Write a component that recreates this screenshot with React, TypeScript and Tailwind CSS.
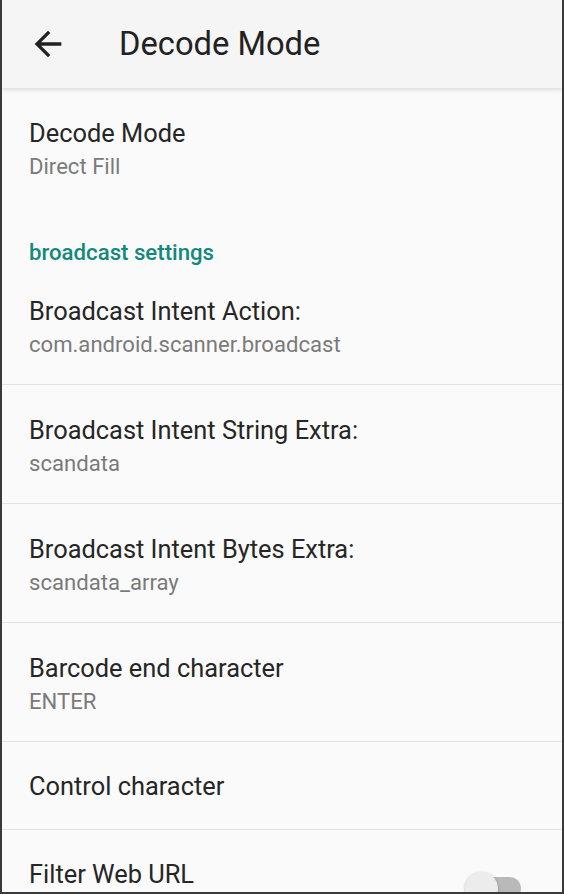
import React from "react";

const font = { fontFamily: "Roboto, 'Noto Sans', sans-serif" };

function TwoLine({ title, sub, divider = true }: { title: string; sub: string; divider?: boolean }) {
  return (
    <div className={`flex h-[119px] shrink-0 flex-col pl-[27px] pt-[29px] ${divider ? "border-b border-[#e3e3e3]" : ""}`}>
      <div className="text-[25.4px] leading-[32px] text-[#262626]">{title}</div>
      <div className="mt-[2px] text-[22.1px] leading-[30px] text-[#7a7a7a]">{sub}</div>
    </div>
  );
}

export default function App() {
  return (
    <div
      className="flex h-[894px] w-[564px] flex-col overflow-hidden border-b-2 border-l-2 border-r-2 border-[#3a3a3a] bg-[#fafafa]"
      style={font}
    >
      <div className="relative z-10 flex h-[88px] shrink-0 items-center bg-[#f5f5f5] shadow-[0_2px_4px_rgba(0,0,0,0.12)]">
        <svg className="ml-[26px] h-[40px] w-[40px]" viewBox="0 0 24 24" fill="#222">
          <path d="M20 11H7.83l5.59-5.59L12 4l-8 8 8 8 1.41-1.41L7.83 13H20v-2z" />
        </svg>
        <div className="ml-[51px] text-[32.7px] leading-[40px] text-[#222]">Decode Mode</div>
      </div>

      <TwoLine title="Decode Mode" sub="Direct Fill" divider={false} />

      <div className="h-[59px] shrink-0 pl-[27px] pt-[31px] text-[22.2px] font-medium leading-[28px] text-[#13897c]">
        broadcast settings
      </div>

      <TwoLine title="Broadcast Intent Action:" sub="com.android.scanner.broadcast" />
      <TwoLine title="Broadcast Intent String Extra:" sub="scandata" />
      <TwoLine title="Broadcast Intent Bytes Extra:" sub="scandata_array" />
      <TwoLine title="Barcode end character" sub="ENTER" />

      <div className="h-[88px] shrink-0 border-b border-[#e3e3e3] pl-[27px] pt-[28px] text-[25.4px] leading-[32px] text-[#262626]">
        Control character
      </div>

      <div className="flex h-[88px] shrink-0 items-start justify-between pl-[27px] pt-[28px]">
        <div className="text-[25.4px] leading-[32px] text-[#262626]">Filter Web URL</div>
        <div className="relative mr-[41px] mt-[14px] h-[33px] w-[56px]">
          <div className="absolute left-[2px] right-0 top-[5px] h-[23px] rounded-full bg-[#b9b9b9]" />
          <div className="absolute left-0 top-0 h-[33px] w-[33px] rounded-full bg-[#ececec] shadow-[0_1px_3px_rgba(0,0,0,0.3)]" />
        </div>
      </div>
    </div>
  );
}
